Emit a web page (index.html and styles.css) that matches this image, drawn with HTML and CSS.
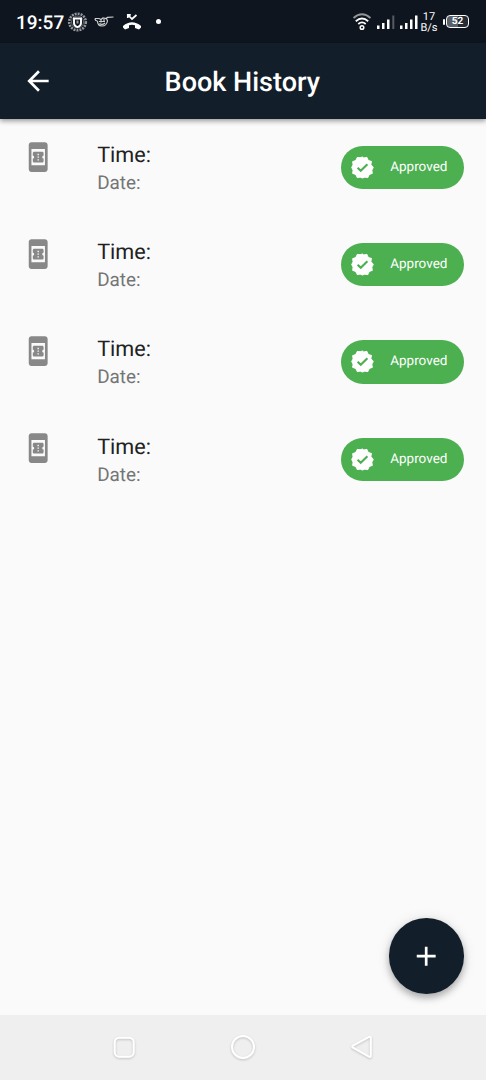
FILE: index.html
```html
<!DOCTYPE html>
<html lang="en">
<head>
<meta charset="utf-8">
<title>Book History</title>
<link rel="stylesheet" href="styles.css">
</head>
<body>
<svg class="defs" aria-hidden="true">
  <symbol id="book" viewBox="0 0 24 24"><path fill="currentColor" fill-rule="evenodd" d="M17 1H7c-1.1 0-2 .9-2 2v18c0 1.1.9 2 2 2h10c1.1 0 2-.9 2-2V3c0-1.1-.9-2-2-2zM7 18V6h10v12H7zm9-7V9c0-.55-.45-1-1-1H9c-.55 0-1 .45-1 1v2c.55 0 1 .45 1 1s-.45 1-1 1v2c0 .55.45 1 1 1h6c.55 0 1-.45 1-1v-2c-.55 0-1-.45-1-1s.45-1 1-1zm-3.5 3.5h-1v-1h1v1zm0-2h-1v-1h1v1zm0-2h-1v-1h1v1z"/></symbol>
  <symbol id="verified" viewBox="0 0 24 24"><path fill="#fff" stroke="#fff" stroke-width="1" stroke-linejoin="round" d="M22.3 12l-2.3-2.6.5-3.1-3-1.1-1.4-2.9-3.1.6L12 2l-1.9.7-3-.4-1.5 2.9-3 1.2.4 3.1L1.7 12 3 14.5l-.4 3.1 3 1.2 1.5 2.9 3-.6 1.9.9 1.9-.9 3.1.6 1.4-2.9 3-1.2-.5-3.1z"/><path fill="none" stroke="#4caf50" stroke-width="2" d="M7.3 12.2l3 3 6.400-6.400"/></symbol>
</svg>
<div class="phone">
  <header class="status">
    <span class="clock">19:57</span>
    <svg class="crest" width="21" height="22" viewBox="0 0 21 22" fill="none" stroke="#fff">
      <circle cx="10.5" cy="11" r="8.3" stroke-width="2.600" stroke-dasharray="2 1" opacity=".55"/>
      <circle cx="10.5" cy="11" r="6" stroke-width="1" opacity=".35"/>
      <path d="M7 7.500h7v4.500q0 3-3.500 4.200Q7 15 7 12z" stroke-width="1.900"/><path d="M9.500 9.500h2v3h-2z" fill="#fff" stroke="none" opacity=".6"/>
    </svg>
    <svg class="bird" width="21" height="14" viewBox="0 0 21 14" fill="none" stroke="#fff" stroke-width="1.200">
      <path d="M1 3.500h4l2 1 2-1.500 3 .5 1.500-1.200 6-.300M1 3.500q0 2.500 2.500 2.500M3.500 6q0 5 4.500 5t5.500-5l-1-2.500M5 6.500h6M5.500 8.500q2.500 2 5.500-.5M7 4.500v3M10 4v3" opacity=".8"/>
    </svg>
    <svg class="missed" width="20" height="18" viewBox="0 0 20 18">
      <path d="M5.800 5V1.800h3M6 2l4 4 4.500-4" fill="none" stroke="#fff" stroke-width="1.700"/>
      <path fill="#fff" d="M1 13q9-7.500 18 0v1.500l-2 2-4-1.500v-2.800q-3-.7-6 0V15l-4 1.500-2-2z"/>
    </svg>
    <i class="dot"></i>
    <svg class="wifi" width="20" height="18" viewBox="0 0 20 18" fill="none" stroke="#fff" stroke-width="1.800">
      <path d="M1.500 5q8.500-7.500 17 0" opacity=".55"/><path d="M3.800 8.200q6.200-5.400 12.400 0M6.300 11q3.700-3.200 7.400 0"/><circle cx="10" cy="14.500" r="1.800" stroke-width="1.500"/>
    </svg>
    <svg class="bars" width="18" height="14" viewBox="0 0 18 14" fill="#fff"><path d="M0 10.500h2.500V14H0zM5 8h2.500v6H5zM10 4.500h2.500V14H10z"/><path d="M15.300.5h2V14h-2z" opacity=".3"/></svg>
    <svg class="bars second" width="18" height="14" viewBox="0 0 18 14" fill="#fff"><path d="M0 10.500h2.500V14H0zM5 8h2.500v6H5zM10 4.500h2.500V14H10zM15 .5h2.500V14H15z"/></svg>
    <span class="rate"><span>17</span><span>B/s</span></span>
    <span class="battery"><i class="tip"></i><span class="cell">52</span></span>
  </header>
  <div class="appbar">
    <svg class="back" width="32" height="32" viewBox="0 0 24 24"><path fill="#fff" d="M20 11H7.830l5.590-5.590L12 4l-8 8 8 8 1.410-1.410L7.830 13H20v-2z"/></svg>
    <h1>Book History</h1>
  </div>
  <main>
    <div class="row"><svg class="book"><use href="#book"/></svg><div class="info"><p class="time">Time:</p><p class="date">Date:</p></div><div class="pill"><svg class="check"><use href="#verified"/></svg><span>Approved</span></div></div>
    <div class="row"><svg class="book"><use href="#book"/></svg><div class="info"><p class="time">Time:</p><p class="date">Date:</p></div><div class="pill"><svg class="check"><use href="#verified"/></svg><span>Approved</span></div></div>
    <div class="row"><svg class="book"><use href="#book"/></svg><div class="info"><p class="time">Time:</p><p class="date">Date:</p></div><div class="pill"><svg class="check"><use href="#verified"/></svg><span>Approved</span></div></div>
    <div class="row"><svg class="book"><use href="#book"/></svg><div class="info"><p class="time">Time:</p><p class="date">Date:</p></div><div class="pill"><svg class="check"><use href="#verified"/></svg><span>Approved</span></div></div>
  </main>
  <div class="fab"><svg width="32.400" height="32.400" viewBox="0 0 24 24"><path fill="#fff" d="M19 13h-6v6h-2v-6H5v-2h6V5h2v6h6z"/></svg></div>
  <nav class="nav">
    <svg width="30" height="30" viewBox="0 0 30 30"><rect x="5.700" y="5.700" width="19" height="19" rx="4.500"/></svg>
    <svg width="30" height="30" viewBox="0 0 30 30"><circle cx="15" cy="15" r="11"/></svg>
    <svg width="30" height="30" viewBox="0 0 30 30"><path d="M22 4.800q1.800-.8 1.800 1.200v17.500q0 2-1.800 1.200L6 15.700q-1.500-1 0-2z"/></svg>
  </nav>
</div>
</body>
</html>
```
FILE: styles.css
```css
* { box-sizing: border-box; }
body { margin: 0; font-family: Roboto, sans-serif; background: #fafafa; text-rendering: geometricPrecision; }
h1, p { margin: 0; }
svg { display: block; flex: none; }
.defs { width: 0; height: 0; position: absolute; }
.phone { position: relative; display: flex; flex-direction: column; width: 486px; height: 1080px; overflow: hidden; }
.status { display: flex; align-items: center; height: 43px; padding-left: 16px; background: #0e151f; color: #fff; flex: none; }
.clock { width: 48px; font-size: 19px; font-weight: 500; line-height: 22px; margin-top: 2px; white-space: nowrap; }
.crest { margin-left: 3px; }
.bird { margin-left: 6px; }
.missed { margin-left: 7px; }
.dot { width: 5px; height: 5px; border-radius: 50%; background: #fff; margin-left: 14px; }
.wifi { margin-left: 191px; }
.bars { margin-left: 5px; }
.bars.second { margin-left: 5px; }
.rate { display: flex; flex-direction: column; align-items: center; width: 18px; margin-left: 2px; font-size: 11px; line-height: 11px; font-weight: 400; }
.battery { display: flex; align-items: center; gap: 1px; margin-left: 5px; }
.tip { width: 2px; height: 6px; border-radius: 1px; background: #fff; }
.cell { width: 23px; height: 13px; border: 1.500px solid #fff; border-radius: 4px; background: linear-gradient(90deg, #59616b 52%, #252c35 52%); font-size: 10px; line-height: 12px; font-weight: 700; text-align: center; }
.appbar { position: relative; z-index: 1; display: flex; align-items: center; height: 76px; padding-left: 21.600px; background: #121e2a; color: #fff; box-shadow: 0 2px 5px rgba(0,0,0,.4); flex: none; }
.appbar h1 { margin-left: 111px; padding-top: 2px; font-size: 27px; line-height: 32px; font-weight: 500; white-space: nowrap; }
main { flex: 1; }
.row { display: flex; align-items: flex-start; height: 97.200px; padding: 21.500px 21.600px 0 21.500px; }
.book { width: 32.400px; height: 32.400px; color: #888; }
.info { width: 240px; margin-left: 43.300px; padding-top: .5px; }
.time { font-size: 21.600px; line-height: 29px; color: #212121; }
.date { font-size: 18.900px; line-height: 26px; color: #757575; }
.pill { display: flex; align-items: center; width: 123px; height: 43.200px; margin-top: 5.500px; margin-left: auto; padding-left: 9px; border-radius: 22px; background: #4caf50; color: #fff; font-size: 13.500px; }
.check { width: 25px; height: 25px; }
.pill span { margin-left: 14.800px; padding-bottom: 1px; }
.fab { position: absolute; left: 388.800px; top: 918px; display: flex; align-items: center; justify-content: center; width: 75.600px; height: 75.600px; border-radius: 50%; background: #121e2a; box-shadow: 0 4px 7px rgba(0,0,0,.28), 0 1px 14px rgba(0,0,0,.1); }
.nav { display: flex; justify-content: center; gap: 89px; height: 65px; padding-top: 17px; background: #efefef; flex: none; }
.nav svg { fill: none; stroke: #fff; stroke-width: 2; filter: drop-shadow(0 1px 1px rgba(0,0,0,.2)); }
```
